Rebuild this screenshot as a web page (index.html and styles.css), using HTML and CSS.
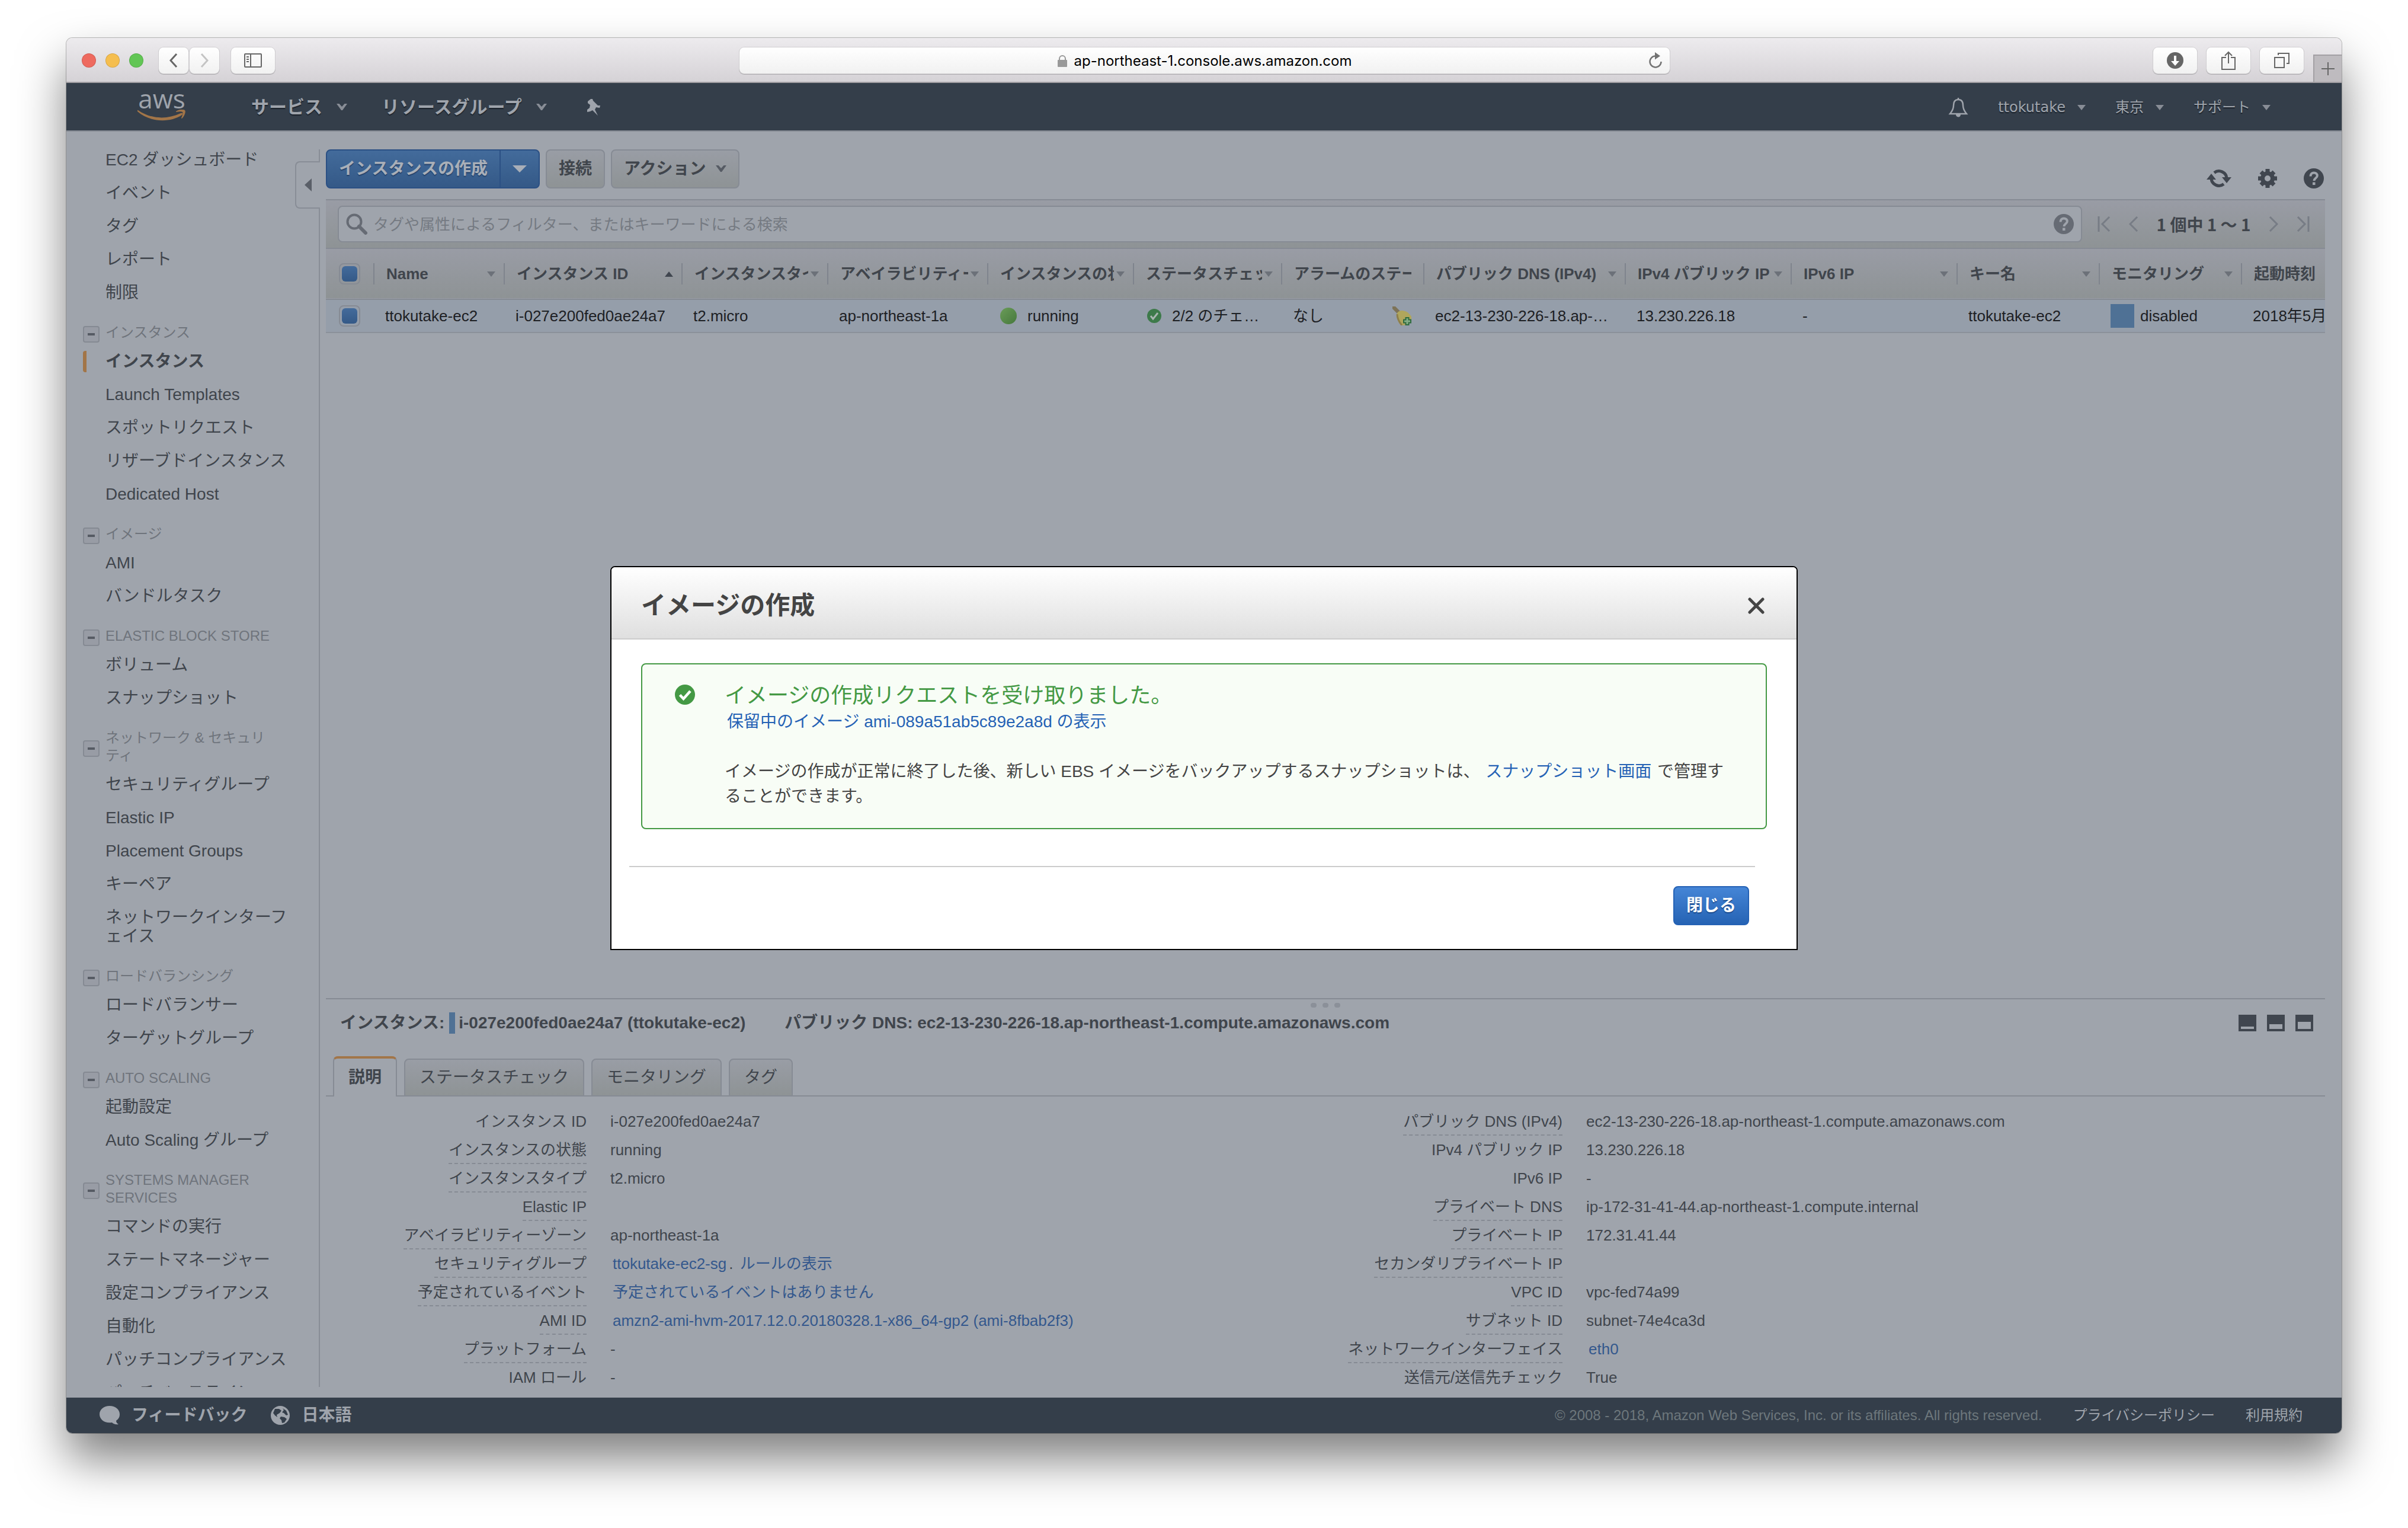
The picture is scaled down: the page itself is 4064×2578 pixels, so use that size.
FILE: index.html
```html
<!DOCTYPE html>
<html lang="ja">
<head>
<meta charset="utf-8">
<title>EC2 Management Console</title>
<link rel="stylesheet" href="styles.css">
</head>
<body>
<svg class="sprite" aria-hidden="true">
  <symbol id="i-chevron" viewBox="0 0 18 12"><path d="M0 0h4.500l4.500 5 4.500-5h4.500l-8 11h-2z" fill="currentColor"/></symbol>
  <symbol id="i-help" viewBox="0 0 34 34"><circle cx="17" cy="17" r="17" fill="currentColor"/><path d="M11.500 13.500c0-4 2.500-6 5.700-6s5.600 2 5.600 5c0 4-5.300 4.200-5.300 8.500" fill="none" stroke="#9fa4ac" stroke-width="4"/><rect x="15" y="23.500" width="4.500" height="4.500" fill="#9fa4ac"/></symbol>
  <symbol id="i-check" viewBox="0 0 34 34"><circle cx="17" cy="17" r="17" fill="currentColor"/><path d="M8.500 17.500l6 6.500 11.500-13" fill="none" stroke="#fff" stroke-width="4.500"/></symbol>
</svg>
<div class="window">
  <header class="browser">
    <div class="lights"><i class="red"></i><i class="yellow"></i><i class="green"></i></div>
    <div class="history">
      <button class="bbtn narrow" aria-label="戻る"><svg width="14" height="24" viewBox="0 0 14 24"><path d="M12 1L2 12l10 11" fill="none" stroke="#666" stroke-width="3"/></svg></button>
      <button class="bbtn narrow" aria-label="進む"><svg width="14" height="24" viewBox="0 0 14 24"><path d="M2 1l10 11L2 23" fill="none" stroke="#c4c4c4" stroke-width="3"/></svg></button>
    </div>
    <button class="bbtn" aria-label="サイドバー"><svg width="30" height="24" viewBox="0 0 30 24"><rect x="1" y="1" width="28" height="22" rx="1" fill="none" stroke="#666" stroke-width="2"/><path d="M11 1v22" stroke="#666" stroke-width="2"/><path d="M4 6h4M4 10h4M4 14h4" stroke="#666" stroke-width="2"/></svg></button>
    <div class="address">
      <span class="url"><svg width="16" height="20" viewBox="0 0 16 20"><rect y="8" width="16" height="12" rx="1" fill="#999"/><path d="M3 9V6a5 5 0 0110 0v3" fill="none" stroke="#999" stroke-width="2"/></svg>ap-northeast-1.console.aws.amazon.com</span>
      <button class="reload" aria-label="再読み込み"><svg width="24" height="28" viewBox="0 0 24 28"><path d="M12 6.500A9.500 9.500 0 1021.500 16" fill="none" stroke="#737373" stroke-width="2.500"/><path d="M11 0l9 6.500-9 6z" fill="#737373"/></svg></button>
    </div>
    <div class="bright">
      <button class="bbtn" aria-label="ダウンロード"><svg width="28" height="28" viewBox="0 0 28 28"><circle cx="14" cy="14" r="14" fill="#666"/><path d="M12 6h4v9h5l-7 8-7-8h5z" fill="#fff"/></svg></button>
      <button class="bbtn" aria-label="共有"><svg width="24" height="32" viewBox="0 0 24 32"><path d="M8 11H1v20h22V11h-7M12 21V3M6 8l6-6 6 6" fill="none" stroke="#666" stroke-width="2"/></svg></button>
      <button class="bbtn" aria-label="タブ一覧"><svg width="26" height="26" viewBox="0 0 26 26"><path d="M1 8h16v17H1z M7 4V1h18v17h-4" fill="none" stroke="#666" stroke-width="2"/></svg></button>
    </div>
    <button class="newtab" aria-label="新規タブ"><svg width="22" height="22" viewBox="0 0 22 22"><path d="M11 0v22M0 11h22" stroke="#666" stroke-width="2"/></svg></button>
  </header>

  <div class="page">
    <nav class="topnav">
      <a class="logo" href="#"><span>aws</span><svg width="82" height="20" viewBox="0 0 82 20"><path d="M1 1c22 15 48 16 72 5 3-1 4 1 2 3C54 23 20 21 0 3c-1-1 0-3 1-2z" fill="#a27548"/><path d="M65 3c5-4 13-4 15-2s0 9-5 14c-1 0-1-1-1-1 2-4 3-9 2-10s-6-1-11 0z" fill="#a27548"/></svg></a>
      <a class="menu" href="#">サービス<svg class="chev" width="18" height="12"><use href="#i-chevron"/></svg></a>
      <a class="menu wide" href="#">リソースグループ<svg class="chev" width="18" height="12"><use href="#i-chevron"/></svg></a>
      <button class="icon pin" aria-label="ピン"><svg width="26" height="28" viewBox="0 0 26 28"><path d="M10 0l3 0 1 3 8 8 4 0-1 4-6-1-2 4 5 10-9-9-4 2-5 1 0-4 4-3 1-5-4-3 0-3z" fill="#9fa4ac"/></svg></button>
      <span class="spacer"></span>
      <button class="icon" aria-label="通知"><svg width="34" height="34" viewBox="0 0 34 34"><path d="M17 1v3M17 4c-6 0-8 4-8 10 0 7-3 10-6 14h28c-3-4-6-7-6-14 0-6-2-10-8-10z" fill="none" stroke="#9fa4ac" stroke-width="2.500"/><path d="M13 29h8c0 6-8 6-8 0z" fill="#9fa4ac"/></svg></button>
      <a class="small first" href="#">ttokutake<i class="tri"></i></a>
      <a class="small" href="#">東京<i class="tri"></i></a>
      <a class="small" href="#">サポート<i class="tri"></i></a>
    </nav>

    <div class="body">
      <aside class="side">
        <button class="collapse" aria-label="サイドバーを閉じる"></button>
        <div class="sidelist">
          <a href="#">EC2 ダッシュボード</a><a href="#">イベント</a><a href="#">タグ</a><a href="#">レポート</a><a href="#">制限</a>
          <h3>インスタンス</h3>
          <a class="current" href="#">インスタンス</a><a href="#">Launch Templates</a><a href="#">スポットリクエスト</a><a href="#">リザーブドインスタンス</a><a href="#">Dedicated Host</a>
          <h3>イメージ</h3>
          <a href="#">AMI</a><a href="#">バンドルタスク</a>
          <h3>ELASTIC BLOCK STORE</h3>
          <a href="#">ボリューム</a><a href="#">スナップショット</a>
          <h3>ネットワーク &amp; セキュリティ</h3>
          <a href="#">セキュリティグループ</a><a href="#">Elastic IP</a><a href="#">Placement Groups</a><a href="#">キーペア</a><a href="#">ネットワークインターフェイス</a>
          <h3>ロードバランシング</h3>
          <a href="#">ロードバランサー</a><a href="#">ターゲットグループ</a>
          <h3>AUTO SCALING</h3>
          <a href="#">起動設定</a><a href="#">Auto Scaling グループ</a>
          <h3>SYSTEMS MANAGER SERVICES</h3>
          <a href="#">コマンドの実行</a><a href="#">ステートマネージャー</a><a href="#">設定コンプライアンス</a><a href="#">自動化</a><a href="#">パッチコンプライアンス</a><a href="#">パッチベースライン</a>
        </div>
      </aside>

      <main class="main">
        <div class="toolbar">
          <div class="split"><button class="primary">インスタンスの作成</button><button class="primary drop" aria-label="その他"><i class="tri"></i></button></div>
          <button class="gray">接続</button>
          <button class="gray">アクション<svg class="chev" width="18" height="12"><use href="#i-chevron"/></svg></button>
          <span class="spacer"></span>
          <div class="tools">
            <button class="icon" aria-label="更新"><svg width="42" height="34" viewBox="0 0 42 34"><path d="M13 7.500A13 13 0 0134 17M29 26.500A13 13 0 018 17" fill="none" stroke="#40464f" stroke-width="5"/><path d="M26 15h16l-8 10zM0 19h16L8 9z" fill="#40464f"/></svg></button>
            <button class="icon" aria-label="設定"><svg width="34" height="34" viewBox="-17 -17 34 34"><circle r="8.500" fill="none" stroke="#40464f" stroke-width="7"/><path d="M0-16v7M0 9v7M-16 0h7M9 0h7M-11-11l5 5M6 6l5 5M-11 11l5-5M6-6l5-5" stroke="#40464f" stroke-width="7"/></svg></button>
            <button class="icon" aria-label="ヘルプ"><svg class="dark" width="34" height="34"><use href="#i-help"/></svg></button>
          </div>
        </div>

        <div class="filter">
          <label class="search">
            <svg width="36" height="36" viewBox="0 0 36 36"><circle cx="14" cy="14" r="11.500" fill="none" stroke="#666b74" stroke-width="4"/><path d="M22 22l11 11" stroke="#666b74" stroke-width="6" stroke-linecap="round"/></svg>
            <input type="text" aria-label="フィルター" placeholder="タグや属性によるフィルター、またはキーワードによる検索">
            <svg class="mid" width="34" height="34"><use href="#i-help"/></svg>
          </label>
          <div class="pager">
            <button class="icon" aria-label="最初"><svg width="22" height="26" viewBox="0 0 22 26"><path d="M2 0v26M20 1L8 13l12 12" fill="none" stroke="#777c85" stroke-width="3"/></svg></button>
            <button class="icon" aria-label="前へ"><svg width="16" height="26" viewBox="0 0 16 26"><path d="M14 1L2 13l12 12" fill="none" stroke="#777c85" stroke-width="3"/></svg></button>
            <span>1 個中 1 ～ 1</span>
            <button class="icon" aria-label="次へ"><svg width="16" height="26" viewBox="0 0 16 26"><path d="M2 1l12 12L2 25" fill="none" stroke="#777c85" stroke-width="3"/></svg></button>
            <button class="icon" aria-label="最後"><svg width="22" height="26" viewBox="0 0 22 26"><path d="M20 0v26M2 1l12 12L2 25" fill="none" stroke="#777c85" stroke-width="3"/></svg></button>
          </div>
        </div>

        <table class="grid">
          <colgroup><col class="c80"><col class="c220"><col class="c300"><col class="c246"><col class="c270"><col class="c246"><col class="c250"><col class="c240"><col class="c340"><col class="c280"><col class="c280"><col class="c240"><col class="c240"><col></colgroup>
          <thead><tr>
            <th class="pick"><input type="checkbox" checked aria-label="すべて選択"></th>
            <th><div><span>Name</span><i class="tri"></i></div></th>
            <th><div><span>インスタンス ID</span><i class="tri up"></i></div></th>
            <th><div><span>インスタンスタイプ</span><i class="tri"></i></div></th>
            <th><div><span>アベイラビリティーゾーン</span><i class="tri"></i></div></th>
            <th><div><span>インスタンスの状態</span><i class="tri"></i></div></th>
            <th><div><span>ステータスチェック</span><i class="tri"></i></div></th>
            <th><div class="nosort"><span>アラームのステータス</span></div></th>
            <th><div><span>パブリック DNS (IPv4)</span><i class="tri"></i></div></th>
            <th><div><span>IPv4 パブリック IP</span><i class="tri"></i></div></th>
            <th><div><span>IPv6 IP</span><i class="tri"></i></div></th>
            <th><div><span>キー名</span><i class="tri"></i></div></th>
            <th><div><span>モニタリング</span><i class="tri"></i></div></th>
            <th><div class="last"><span>起動時刻</span></div></th>
          </tr></thead>
          <tbody><tr>
            <td class="pick"><input type="checkbox" checked aria-label="ttokutake-ec2 を選択"></td>
            <td>ttokutake-ec2</td>
            <td>i-027e200fed0ae24a7</td>
            <td>t2.micro</td>
            <td>ap-northeast-1a</td>
            <td><div class="state"><i class="dot"></i>running</div></td>
            <td><div class="state"><svg class="ok" width="24" height="24" viewBox="0 0 24 24"><circle cx="12" cy="12" r="12" fill="#3d7a4a"/><path d="M6 12l4 5 8-10" fill="none" stroke="#a9b5b0" stroke-width="3"/></svg>2/2 のチェ…</div></td>
            <td><div class="alarm">なし<svg width="32" height="32" viewBox="0 0 32 32"><path d="M0 0h5l8 8-4 5-9-9z" fill="#7d7358"/><path d="M8 11c3-4 8-5 13-3 5 1 8 5 11 9v8c-6 6-12 7-17 7-5-4-9-13-7-21z" fill="#b0a65c"/><path d="M8 13c0 8 4 14 8 19" fill="none" stroke="#8d7f4c" stroke-width="3"/><path d="M25 18v14M18 25h14" stroke="#2f6b3f" stroke-width="7"/><path d="M25 20v10M20 25h10" stroke="#83ad86" stroke-width="3"/></svg></div></td>
            <td>ec2-13-230-226-18.ap-…</td>
            <td>13.230.226.18</td>
            <td>-</td>
            <td>ttokutake-ec2</td>
            <td><div class="state mon"><i class="square"></i>disabled</div></td>
            <td>2018年5月</td>
          </tr></tbody>
        </table>

        <section class="detail">
          <div class="grip"><i></i><i></i><i></i></div>
          <div class="dtitle">
            <b>インスタンス:</b><i class="mark"></i><b>i-027e200fed0ae24a7 (ttokutake-ec2)</b><b class="dns">パブリック DNS: ec2-13-230-226-18.ap-northeast-1.compute.amazonaws.com</b>
            <span class="spacer"></span>
            <div class="layout">
              <button class="icon lay" aria-label="小"><i class="s"></i></button>
              <button class="icon lay" aria-label="中"><i class="m"></i></button>
              <button class="icon lay" aria-label="大"><i class="l"></i></button>
            </div>
          </div>
          <div class="tabs">
            <button class="tab active">説明</button><button class="tab">ステータスチェック</button><button class="tab">モニタリング</button><button class="tab">タグ</button>
          </div>
          <div class="props">
            <dl>
              <dt><span class="plain">インスタンス ID</span></dt><dd>i-027e200fed0ae24a7</dd>
              <dt><span>インスタンスの状態</span></dt><dd>running</dd>
              <dt><span>インスタンスタイプ</span></dt><dd>t2.micro</dd>
              <dt><span>Elastic IP</span></dt><dd></dd>
              <dt><span>アベイラビリティーゾーン</span></dt><dd>ap-northeast-1a</dd>
              <dt><span>セキュリティグループ</span></dt><dd><a href="#">ttokutake-ec2-sg</a>. <a href="#">ルールの表示</a></dd>
              <dt><span>予定されているイベント</span></dt><dd><a href="#">予定されているイベントはありません</a></dd>
              <dt><span>AMI ID</span></dt><dd><a href="#">amzn2-ami-hvm-2017.12.0.20180328.1-x86_64-gp2 (ami-8fbab2f3)</a></dd>
              <dt><span>プラットフォーム</span></dt><dd>-</dd>
              <dt><span class="plain">IAM ロール</span></dt><dd>-</dd>
            </dl>
            <dl>
              <dt><span>パブリック DNS (IPv4)</span></dt><dd>ec2-13-230-226-18.ap-northeast-1.compute.amazonaws.com</dd>
              <dt><span class="plain">IPv4 パブリック IP</span></dt><dd>13.230.226.18</dd>
              <dt><span class="plain">IPv6 IP</span></dt><dd>-</dd>
              <dt><span>プライベート DNS</span></dt><dd>ip-172-31-41-44.ap-northeast-1.compute.internal</dd>
              <dt><span>プライベート IP</span></dt><dd>172.31.41.44</dd>
              <dt><span>セカンダリプライベート IP</span></dt><dd></dd>
              <dt><span>VPC ID</span></dt><dd>vpc-fed74a99</dd>
              <dt><span>サブネット ID</span></dt><dd>subnet-74e4ca3d</dd>
              <dt><span>ネットワークインターフェイス</span></dt><dd><a href="#">eth0</a></dd>
              <dt><span class="plain">送信元/送信先チェック</span></dt><dd>True</dd>
            </dl>
          </div>
        </section>
      </main>
    </div>

    <footer class="footer">
      <a class="fb" href="#"><svg width="34" height="32" viewBox="0 0 34 32"><path d="M17 0c9.500 0 17 6 17 14 0 5-2 8-6 11 0 3 2 5 4 6-5 1-9-1-11-3C9 30 0 23 0 14 0 6 7.500 0 17 0z" fill="#9fa4ac"/></svg>フィードバック</a>
      <a class="fb" href="#"><svg width="32" height="32" viewBox="0 0 32 32"><circle cx="16" cy="16" r="16" fill="#9fa4ac"/><path d="M7 5l7 0 4 3-3 4-5 3 1 4-4-3-3-4zM20 4l6 4 3 7-3 1-4-4-3-1 3-4zM17 18l6 1 4 3-4 6-4 1-1-5-3-3z" fill="#343e4a"/></svg>日本語</a>
      <span class="spacer"></span>
      <span class="copy">© 2008 - 2018, Amazon Web Services, Inc. or its affiliates. All rights reserved.</span>
      <a href="#">プライバシーポリシー</a>
      <a href="#">利用規約</a>
    </footer>

    <div class="overlay">
      <div class="dialog" role="dialog" aria-labelledby="dlg-title">
        <div class="dhead"><h2 id="dlg-title">イメージの作成</h2><button class="icon" aria-label="閉じる"><svg width="28" height="28" viewBox="0 0 28 28"><path d="M3 3l22 22M25 3L3 25" stroke="#444" stroke-width="5" stroke-linecap="round"/></svg></button></div>
        <div class="dbody">
          <div class="success">
            <svg width="34" height="34"><use href="#i-check"/></svg>
            <div>
              <h4>イメージの作成リクエストを受け取りました。</h4>
              <p><a href="#">保留中のイメージ ami-089a51ab5c89e2a8d の表示</a></p>
              <p class="note">イメージの作成が正常に終了した後、新しい EBS イメージをバックアップするスナップショットは、 <a href="#">スナップショット画面</a> で管理することができます。</p>
            </div>
          </div>
        </div>
        <div class="dfoot"><button class="close">閉じる</button></div>
      </div>
    </div>
  </div>
</div>
</body>
</html>
```
FILE: styles.css
```css
* { box-sizing: border-box; }
body {
  margin: 0;
  height: 100vh;
  padding: 64px 112px 160px;
  background: #fff;
  color: #40454c;
  font-family: "Liberation Sans", "Noto Sans CJK JP", sans-serif;
  font-size: 26px;
  line-height: 48px;
  overflow: hidden;
}
a { color: inherit; text-decoration: none; }
button { font: inherit; color: inherit; border: 0; padding: 0; background: none; }
svg { display: block; flex: none; }
h2, h3, h4, p, dl, dd { margin: 0; }
.sprite { position: absolute; width: 0; height: 0; }
.spacer { flex: 1; }
.icon { display: flex; }
.chev { color: #888d96; }
.tri {
  flex: none;
  width: 0;
  border: 7px solid transparent;
  border-top: 9px solid currentColor;
  border-bottom: 0;
}
.tri.up { border-top: 0; border-bottom: 9px solid currentColor; }

.window {
  height: 100%;
  display: flex;
  flex-direction: column;
  border-radius: 10px;
  box-shadow: 0 0 0 1px rgba(0, 0, 0, .25), 0 44px 80px rgba(0, 0, 0, .5);
}

/* browser chrome */
.browser {
  flex: none;
  position: relative;
  display: flex;
  align-items: center;
  height: 76px;
  padding: 2px 64px 0 26px;
  background: linear-gradient(#edebee, #d5d2d6);
  border-bottom: 2px solid #a3a0a4;
  border-radius: 10px 10px 0 0;
}
.lights { display: flex; gap: 16px; margin-right: 26px; }
.lights i { width: 24px; height: 24px; border-radius: 50%; border: 1px solid rgba(0, 0, 0, .12); }
.red { background: #ee6a5f; }
.yellow { background: #f5be4f; }
.green { background: #62c655; }
.bbtn {
  display: flex;
  align-items: center;
  justify-content: center;
  width: 74px;
  height: 44px;
  border-radius: 8px;
  background: linear-gradient(#fff, #f1f1f1);
  box-shadow: 0 0 0 1px #cfcdd0, 0 1px 0 1px #b0aeb1;
}
.narrow { width: 50px; }
.history { display: flex; gap: 2px; margin-right: 20px; }
.address {
  flex: 1;
  position: relative;
  display: flex;
  align-items: center;
  justify-content: center;
  height: 44px;
  margin: 0 816px 0 784px;
  border-radius: 8px;
  background: linear-gradient(#fff, #f1f1f1);
  box-shadow: 0 0 0 1px #cfcdd0, 0 1px 0 1px #b0aeb1;
}
.url { display: flex; align-items: center; gap: 12px; color: #000; font-family: Inter, sans-serif; font-size: 24px; line-height: 44px; padding-top: 2px; }
.reload { position: absolute; right: 12px; top: 8px; }
.bright { display: flex; gap: 16px; }
.newtab {
  position: absolute;
  right: 0;
  bottom: 0;
  display: flex;
  align-items: center;
  justify-content: center;
  width: 48px;
  height: 46px;
  background: #bebbbf;
  border: solid #a3a0a4;
  border-width: 2px 0 0 2px;
}

/* console page */
.page { flex: 1; min-height: 0; position: relative; display: flex; flex-direction: column; background: #9fa4ac; border-radius: 0 0 10px 10px; }
.topnav {
  flex: none;
  display: flex;
  align-items: center;
  height: 82px;
  padding: 2px 120px 0 120px;
  background: #343e4a;
  border-bottom: 2px solid #868b94;
  color: #9fa4ac;
  text-shadow: 0 2px 1px #1b222b;
}
.logo { width: 82px; margin-right: 110px; padding-bottom: 8px; display: flex; flex-direction: column; align-items: center; text-shadow: none; }
.logo span { font: 400 44px/34px "Open Sans", sans-serif; margin-bottom: 2px; }
.menu { display: flex; align-items: center; gap: 24px; font-size: 30px; font-weight: 700; margin-right: 58px; }
.menu.wide { gap: 24px; margin-right: 64px; }
.small { display: flex; align-items: center; gap: 20px; margin-left: 50px; font-family: "DejaVu Sans", "Noto Sans CJK JP", sans-serif; font-size: 24px; }
.small .tri { color: #888d96; }
.body { flex: 1; min-height: 0; display: flex; }

.side {
  flex: none;
  position: relative;
  width: 428px;
  margin: 20px 0 18px;
  background: linear-gradient(#888d96, #888d96) right bottom / 2px calc(100% - 10px) no-repeat;
}
.collapse {
  position: absolute;
  right: 0;
  top: 30px;
  width: 42px;
  height: 80px;
  background: #9fa4ac;
  border: 2px solid #888d96;
  border-right: 0;
  border-radius: 8px 0 0 8px;
}
.collapse::before { content: ""; display: block; width: 0; margin-left: 14px; border: 11px solid transparent; border-right: 12px solid #5a5f68; border-left: 0; }
.sidelist { height: 100%; padding: 0 42px 0 28px; overflow: hidden; font-size: 28px; line-height: 32px; }
.sidelist a { display: block; padding: 12px 0 12px 38px; }
.sidelist .current { position: relative; font-weight: 700; }
.current::before { content: ""; position: absolute; left: 0; top: 10px; width: 6px; height: 36px; border-radius: 4px 0 0 4px; background: #a27548; }
.sidelist h3 { position: relative; padding: 24px 40px 6px 38px; font-size: 24px; font-weight: 400; line-height: 30px; color: #6f747c; }
.sidelist h3::before {
  content: "";
  position: absolute;
  left: 0;
  top: calc(50% - 2px);
  width: 24px;
  height: 24px;
  border: 2px solid #858a93;
  border-radius: 4px;
  background: linear-gradient(#565b64, #565b64) center / 12px 4px no-repeat, #989ca5;
}

.main { flex: 1; min-width: 0; display: flex; flex-direction: column; padding: 30px 28px 0 10px; }
.toolbar { display: flex; align-items: flex-end; gap: 10px; margin-bottom: 18px; font-size: 28px; font-weight: 700; }
.split { display: flex; }
.primary {
  height: 66px;
  padding: 0 20px;
  color: #a9afb8;
  background: linear-gradient(#436b9b, #345987);
  border: 2px solid #2b5084;
  border-radius: 8px 0 0 8px;
  text-shadow: 0 2px 1px #24426b;
}
.primary.drop { display: flex; align-items: center; justify-content: center; width: 68px; margin-left: -2px; border-radius: 0 8px 8px 0; }
.drop .tri { border-width: 12px 12px 0; }
.gray {
  display: flex;
  align-items: center;
  gap: 16px;
  height: 66px;
  padding: 0 20px;
  background: linear-gradient(#999da5, #8e9395);
  border: 2px solid #868b94;
  border-radius: 8px;
}
.gray .chev { color: #565b64; }
.tools { display: flex; gap: 44px; align-items: flex-end; margin-right: 2px; }
.dark { color: #40464f; }
.mid { color: #666b74; }

.filter {
  display: flex;
  align-items: center;
  height: 84px;
  padding-left: 20px;
  background: linear-gradient(#999ca5, #8e9395);
  border: solid #868b94;
  border-width: 2px 0;
}
.search {
  flex: 1;
  display: flex;
  align-items: center;
  gap: 10px;
  height: 62px;
  padding: 0 12px;
  background: #9fa4ac;
  border: 2px solid #868b94;
  border-radius: 8px;
}
.search input { flex: 1; border: 0; padding: 2px 0 0; background: none; font: inherit; outline: 0; }
.search input::placeholder { color: #757a82; opacity: 1; }
.pager { display: flex; align-items: center; justify-content: space-between; width: 410px; padding: 0 26px; font: 700 28px/48px "Noto Sans CJK JP", sans-serif; }

.grid { width: 100%; table-layout: fixed; border-collapse: collapse; line-height: 36px; white-space: nowrap; }
.c80 { width: 80px; } .c220 { width: 220px; } .c240 { width: 240px; } .c246 { width: 246px; } .c250 { width: 250px; }
.c270 { width: 270px; } .c280 { width: 280px; } .c300 { width: 300px; } .c340 { width: 340px; }
.grid thead tr { height: 85px; background: linear-gradient(#999ca5, #8e9395); border-bottom: 2px solid #868b94; }
.grid th { padding: 0; text-align: left; }
.grid th div { display: flex; align-items: center; height: 36px; padding: 0 14px 0 20px; border-left: 2px solid #7f848d; }
.grid th span { flex: 1; overflow: hidden; }
.grid th .tri { margin-left: 4px; color: #6c7179; }
.grid th .tri.up { color: #40464f; }
.grid th .nosort { padding-right: 20px; }
.grid th .last { padding-right: 0; }
.grid tbody tr { height: 56px; background: #959eaa; border-bottom: 2px solid #8b919a; color: #1d2024; }
.grid td { padding: 0 0 0 20px; overflow: hidden; }
.grid .pick { padding-left: 22px; }
.pick input {
  appearance: none;
  display: block;
  width: 36px;
  height: 36px;
  margin: 0;
  padding: 3px;
  border: 2px solid #868b94;
  border-radius: 8px;
}
.pick input::before { content: ""; display: block; width: 26px; height: 26px; border-radius: 6px; background: linear-gradient(#436b9b, #345987); }
.state { display: flex; align-items: center; gap: 18px; padding-left: 2px; }
.ok { margin-left: 2px; }
.mon { gap: 10px; padding-left: 0; }
.dot { width: 28px; height: 28px; border-radius: 50%; background: linear-gradient(135deg, #6a9c58, #46783c); }
.square { width: 40px; height: 40px; background: #4f7195; }
.alarm { display: flex; align-items: center; justify-content: space-between; padding-right: 20px; }

.detail { flex: none; margin-top: auto; border-top: 2px solid #868b94; }
.grip { display: flex; justify-content: center; gap: 10px; padding-top: 6px; }
.grip i { width: 10px; height: 8px; border-radius: 4px; background: #8b9099; }
.dtitle { display: flex; align-items: center; height: 52px; padding: 0 20px 0 24px; font-size: 28px; }
.mark { width: 10px; height: 36px; margin: 0 6px 0 8px; background: #4f7195; }
.dns { margin-left: 66px; }
.layout { display: flex; gap: 18px; }
.lay { width: 30px; height: 28px; padding: 4px; align-items: flex-end; background: #40464f; }
.lay i { flex: 1; background: #9fa4ac; }
.lay .s { height: 4px; } .lay .m { height: 8px; } .lay .l { height: 12px; }
.tabs { display: flex; align-items: flex-end; gap: 12px; margin-top: 30px; padding-left: 12px; background: linear-gradient(#868b94, #868b94) bottom / 100% 2px no-repeat; }
.tab {
  height: 64px;
  padding: 0 24px;
  font-size: 28px;
  background: linear-gradient(#999da5, #8e9395);
  border: 2px solid #868b94;
  border-radius: 8px 8px 0 0;
}
.tab.active { height: 68px; font-weight: 700; background: #9fa4ac; border-top: 4px solid #a27548; border-bottom: 0; }
.props { display: grid; grid-template-columns: 1fr 1fr; padding: 18px 80px 10px 0; }
.props dl { display: grid; grid-template-columns: 440px 1fr; column-gap: 40px; grid-auto-rows: 48px; white-space: nowrap; }
.props dt { text-align: right; }
.props dt span { display: inline-block; height: 48px; border-bottom: 2px dashed #868b94; }
.props dt .plain { border-bottom-color: transparent; }
.props dd a { color: #34588d; padding: 0 4px; }

.footer {
  flex: none;
  display: flex;
  align-items: center;
  height: 60px;
  padding: 0 66px 0 56px;
  background: #343e4a;
  border-radius: 0 0 10px 10px;
  color: #9fa4ac;
  font-size: 24px;
}
.footer a { margin-left: 52px; }
.footer .fb { display: flex; align-items: center; gap: 20px; margin: 0 40px 0 0; font-size: 28px; font-weight: 700; }
.copy { color: #6d777c; }

/* dialog over the page */
.overlay { position: absolute; inset: 0; display: grid; place-items: center; }
.dialog { width: 2004px; background: #fff; border: 2px solid #000; border-radius: 8px 8px 0 0; color: #444; font-size: 28px; line-height: 42px; overflow: hidden; }
.dhead { display: flex; align-items: center; justify-content: space-between; height: 122px; padding: 10px 54px 0 50px; background: linear-gradient(#fff, #dfdfdf); border-bottom: 2px solid #ccc; }
.dhead h2 { font-size: 42px; }
.dbody { padding: 40px 50px 62px; }
.success { display: flex; height: 280px; padding: 32px 50px 0 55px; gap: 50px; background: #f8fdf6; border: 2px solid #449944; border-radius: 8px; color: #449944; }
.success > svg { margin-top: 2px; }
.success h4 { margin-bottom: 2px; font-size: 36px; font-weight: 400; line-height: 42px; }
.success p { color: #444; }
.success a { color: #2562b5; padding: 0 4px; }
.success .note { margin-top: 42px; }
.note a { padding: 0 2px; }
.dfoot { display: flex; justify-content: flex-end; margin: 0 70px 40px 30px; padding: 32px 10px 0 0; border-top: 2px solid #ccc; }
.close { height: 66px; padding: 0 20px; color: #fff; font-weight: 700; background: linear-gradient(#4585d6, #2663b4); border: 2px solid #2562b5; border-radius: 8px; text-shadow: 0 2px 1px #1b4a8c; }
```
